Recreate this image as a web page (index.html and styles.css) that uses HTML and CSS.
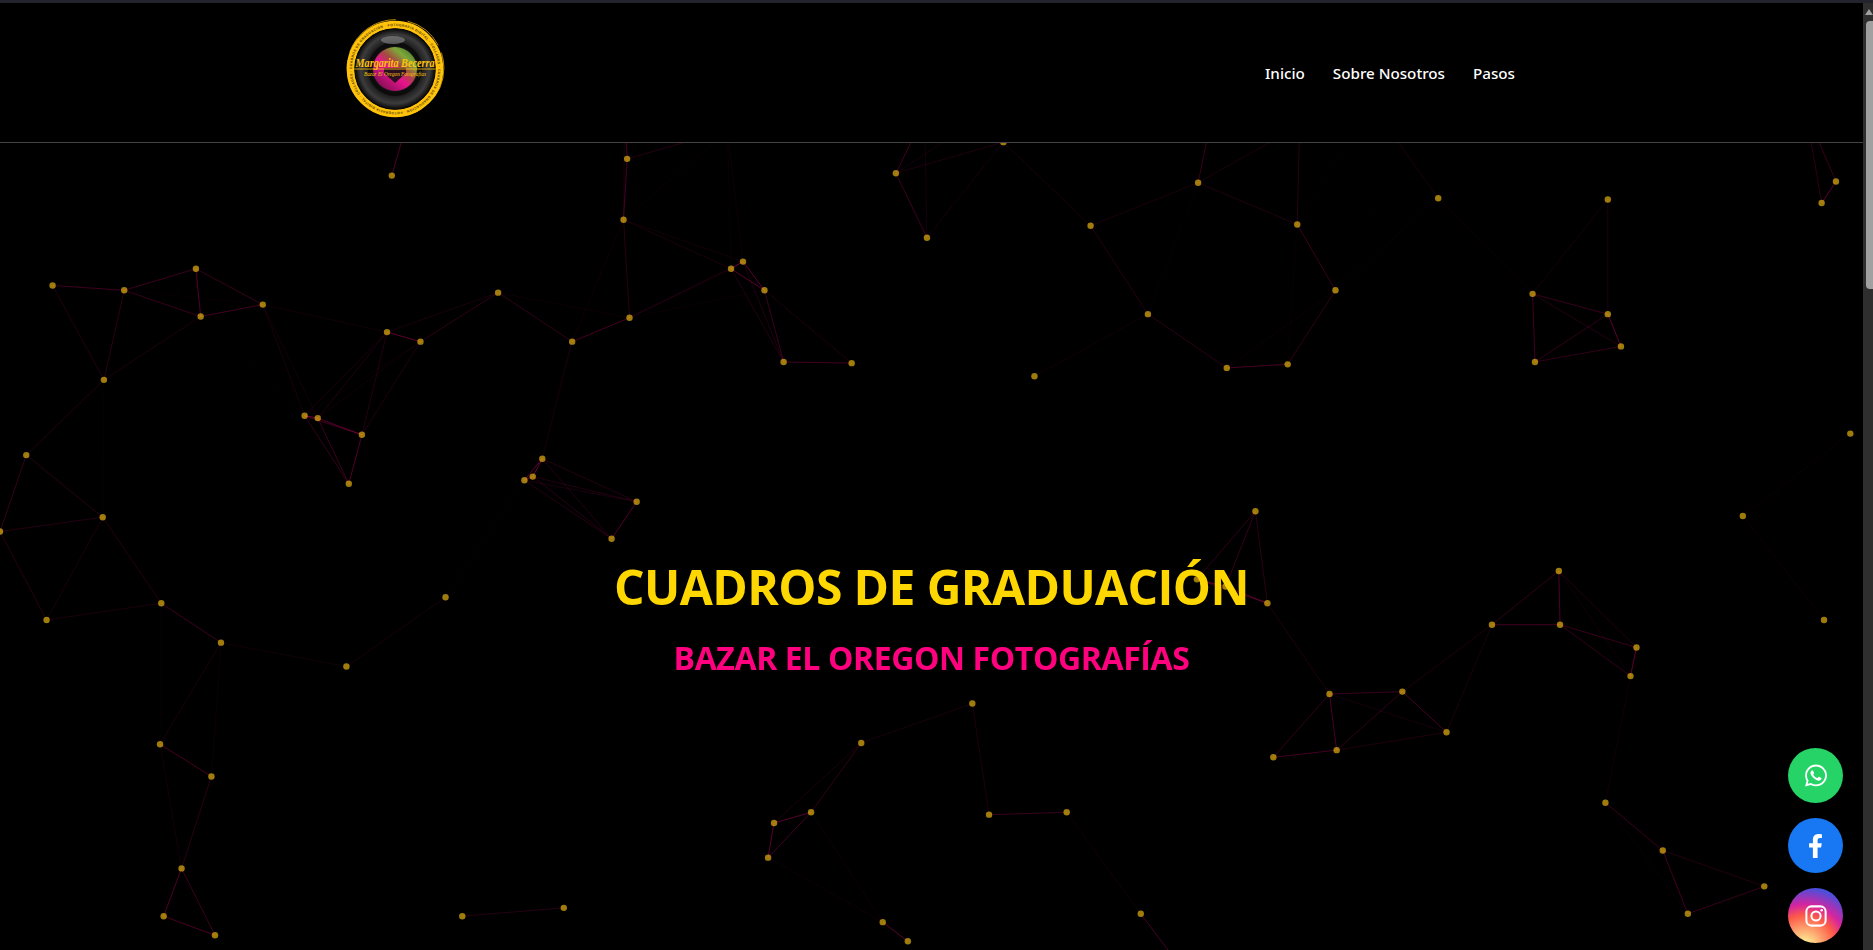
FILE: index.html
```html
<!DOCTYPE html>
<html lang="es">
<head>
    <meta charset="UTF-8">
    <meta name="viewport" content="width=device-width, initial-scale=1.0">
    <title>Cuadros de Graduación</title>
    <link rel="stylesheet" href="styles.css">
</head>
<body>
    <div class="window-bar"></div>
    <div class="window">
        <div class="page">
            <canvas id="particles" width="1863" height="947"></canvas>
            <header class="site-header">
                <a class="logo" href="#">
                    <svg viewBox="0 0 100 100" width="100" height="100">
                        <defs>
                            <radialGradient id="lensBody" cx="50%" cy="50%" r="50%">
                                <stop offset="0" stop-color="#444"/>
                                <stop offset="0.6" stop-color="#101010"/>
                                <stop offset="0.72" stop-color="#262626"/>
                                <stop offset="0.85" stop-color="#3c3c3c"/>
                                <stop offset="1" stop-color="#050505"/>
                            </radialGradient>
                            <linearGradient id="lensGlass" x1="0.15" y1="0.85" x2="0.8" y2="0.1">
                                <stop offset="0" stop-color="#8c0f5a"/>
                                <stop offset="0.4" stop-color="#e8148c"/>
                                <stop offset="0.62" stop-color="#a34a40"/>
                                <stop offset="0.85" stop-color="#7fa83a"/>
                                <stop offset="1" stop-color="#5c8a30"/>
                            </linearGradient>
                            <path id="ringPath" d="M50 50m-43 0a43 43 0 1 1 86 0a43 43 0 1 1-86 0"/>
                        </defs>
                        <circle cx="50" cy="50" r="44.5" fill="none" stroke="#ffc30b" stroke-width="7.5"/>
                        <circle cx="50.5" cy="49" r="48.4" fill="none" stroke="#ffc30b" stroke-width="0.7" stroke-dasharray="40 8 60 12"/>
                        <circle cx="50" cy="50" r="40.5" fill="url(#lensBody)"/>
                        <circle cx="50" cy="50" r="25" fill="none" stroke="#0c0c0c" stroke-width="4"/>
                        <circle cx="50" cy="50" r="22" fill="url(#lensGlass)"/>
                        <path class="lens-iris" d="M50 64 39 54 39 49 61 49 61 54z"/>
                        <ellipse cx="48" cy="21" rx="12" ry="4" fill="#8c8c8c" opacity="0.6"/>
                        <text class="logo-ring"><textPath href="#ringPath" textLength="268">CUADROS DE GRADUACIÓN · FOTOGRAFÍA DIGITAL · COLLAGES · CUADROS DE GRADUACIÓN · FOTOGRAFÍA DIGITAL · COLLAGES ·</textPath></text>
                        <line x1="9" y1="50" x2="91" y2="50" stroke="#ffc30b" stroke-width="0.8"/>
                        <text class="logo-name" x="50" y="48" text-anchor="middle" textLength="79" lengthAdjust="spacingAndGlyphs">Margarita Becerra</text>
                        <text class="logo-sub" x="50" y="56.5" text-anchor="middle" textLength="62" lengthAdjust="spacingAndGlyphs">Bazar El Oregon Fotografías</text>
                    </svg>
                </a>
                <nav class="main-nav">
                    <a href="#">Inicio</a>
                    <a href="#">Sobre Nosotros</a>
                    <a href="#">Pasos</a>
                </nav>
            </header>
            <section class="hero">
                <h1>CUADROS DE GRADUACIÓN</h1>
                <h2>BAZAR EL OREGON FOTOGRAFÍAS</h2>
            </section>
            <div class="social-links">
                <a class="social whatsapp" href="#" aria-label="WhatsApp">
                    <svg viewBox="0 0 448 512" width="22" height="25"><path fill="#fff" d="M380.9 97.1C339 55.1 283.2 32 223.9 32c-122.4 0-222 99.6-222 222 0 39.1 10.2 77.3 29.6 111L0 480l117.7-30.9c32.4 17.7 68.9 27 106.1 27h.1c122.3 0 224.1-99.6 224.1-222 0-59.3-25.2-115-67.1-157zm-157 341.6c-33.2 0-65.7-8.9-94-25.7l-6.7-4-69.8 18.3L72 359.2l-4.4-7c-18.5-29.4-28.2-63.3-28.2-98.2 0-101.7 82.8-184.5 184.6-184.5 49.3 0 95.6 19.2 130.4 54.1 34.8 34.9 56.2 81.2 56.1 130.5 0 101.8-84.9 184.6-186.6 184.6zm101.2-138.2c-5.5-2.8-32.8-16.2-37.9-18-5.1-1.9-8.8-2.8-12.5 2.8-3.7 5.6-14.3 18-17.6 21.8-3.2 3.7-6.5 4.2-12 1.4-32.6-16.3-54-29.1-75.5-66-5.7-9.8 5.7-9.1 16.3-30.3 1.8-3.7.9-6.9-.5-9.7-1.4-2.8-12.5-30.1-17.1-41.2-4.5-10.8-9.1-9.3-12.5-9.5-3.2-.2-6.9-.2-10.6-.2-3.7 0-9.7 1.4-14.8 6.9-5.1 5.6-19.4 19-19.4 46.3 0 27.3 19.9 53.7 22.6 57.4 2.8 3.7 39.1 59.7 94.8 83.8 35.2 15.2 49 16.5 66.6 13.9 10.7-1.6 32.8-13.4 37.4-26.4 4.6-13 4.6-24.1 3.2-26.4-1.3-2.5-5-3.9-10.5-6.6z"/></svg>
                </a>
                <a class="social facebook" href="#" aria-label="Facebook">
                    <svg viewBox="0 0 320 512" width="15" height="24"><path fill="#fff" d="M279.14 288l14.22-92.66h-88.91v-60.13c0-25.35 12.42-50.06 52.24-50.06h40.42V6.26S260.43 0 225.36 0c-73.22 0-121.08 44.38-121.08 124.72v70.62H22.89V288h81.39v224h100.17V288z"/></svg>
                </a>
                <a class="social instagram" href="#" aria-label="Instagram">
                    <svg viewBox="0 0 24 24" width="22" height="22">
                        <rect x="1.5" y="1.5" width="21" height="21" rx="5.5" fill="none" stroke="#fff" stroke-width="2.2"/>
                        <circle cx="12" cy="12" r="5" fill="none" stroke="#fff" stroke-width="2.2"/>
                        <circle cx="18.2" cy="5.8" r="1.4" fill="#fff"/>
                    </svg>
                </a>
            </div>
        </div>
        <div class="scrollbar">
            <div class="scroll-arrow"></div>
            <div class="scroll-thumb"></div>
        </div>
    </div>
    <script src="particles.js"></script>
</body>
</html>
```
FILE: styles.css
```css
* {
    box-sizing: border-box;
}
html, body {
    height: 100%;
    overflow: hidden;
}
body {
    margin: 0;
    background-color: #000;
    color: #fff;
    font-family: "Open Sans", "Noto Sans", sans-serif;
}
a {
    color: inherit;
    text-decoration: none;
}
.window-bar {
    height: 3px;
    background-color: #23232e;
}
.window {
    display: flex;
    height: 947px;
}
.page {
    position: relative;
    flex: 1;
    overflow: hidden;
    background-color: #000;
}
#particles {
    position: absolute;
    top: 0;
    left: 0;
}
.site-header {
    position: relative;
    display: flex;
    justify-content: space-between;
    align-items: center;
    height: 140px;
    padding: 0 348px 0 345px;
    background-color: #000;
    border-bottom: 1px solid #444;
}
.logo {
    display: flex;
    margin-top: -8px;
}
.lens-iris {
    fill: #2a0f20;
}
.logo-ring {
    font-family: "Liberation Sans", sans-serif;
    font-size: 3.4px;
    font-weight: 700;
    fill: #4a3200;
}
.logo-name {
    font-family: "Liberation Serif", serif;
    font-style: italic;
    font-weight: 700;
    font-size: 12px;
    fill: #ffc30b;
}
.logo-sub {
    font-family: "Liberation Serif", serif;
    font-style: italic;
    font-size: 6px;
    fill: #ffc30b;
}
.main-nav {
    display: flex;
    gap: 28px;
    margin-top: 1px;
    font-family: "Noto Sans", sans-serif;
    font-size: 15.2px;
    font-weight: 500;
}
.hero {
    position: relative;
    display: flex;
    flex-direction: column;
    align-items: center;
    padding-top: 408px;
}
.hero h1 {
    margin: 0;
    font-size: 48px;
    line-height: 72px;
    font-weight: 700;
    letter-spacing: -0.6px;
    color: #ffd700;
}
.hero h2 {
    margin: -1px 0 0;
    font-size: 32px;
    line-height: 72px;
    font-weight: 700;
    letter-spacing: -0.4px;
    color: #ff007f;
}
.social-links {
    position: absolute;
    right: 20px;
    bottom: 7px;
    display: flex;
    flex-direction: column;
    gap: 15px;
}
.social {
    display: flex;
    justify-content: center;
    align-items: center;
    width: 55px;
    height: 55px;
    border-radius: 50%;
}
.whatsapp {
    background-color: #25d366;
}
.facebook {
    background-color: #1877f2;
}
.instagram {
    background: radial-gradient(circle at 30% 107%, #fdf497 0%, #fdf497 5%, #fd5949 45%, #d6249f 60%, #285aeb 90%);
}
.scrollbar {
    display: flex;
    flex-direction: column;
    align-items: flex-end;
    width: 10px;
    background-color: #2e2e2e;
}
.scroll-arrow {
    width: 0;
    height: 0;
    margin-top: 6px;
    border-left: 4px solid transparent;
    border-right: 4px solid transparent;
    border-bottom: 6px solid #a0a0a0;
}
.scroll-thumb {
    width: 7px;
    height: 268px;
    margin-top: 6px;
    border-radius: 4px 0 0 4px;
    background-color: #a0a0a0;
}
```
FILE: particles.js
```js
// puntos medidos en la captura de 1568px, se escalan al ancho real
const scale = 1873 / 1568;
const maxDist = 150;

const points = [
    [328,147],[525,133],[522,184],[750,145],[776,199],[840,119],[913,189],[1003,153],[1086,188],[1204,166],
    [1346,167],[1537,152],[1525,170],[622,219],[612,225],[640,243],[656,303],[713,304],[527,266],[479,286],
    [417,245],[352,286],[324,278],[220,255],[168,265],[164,225],[104,243],[44,239],[87,318],[255,348],
    [266,350],[303,364],[292,405],[22,381],[0,445],[86,433],[39,519],[135,505],[185,538],[290,558],
    [373,500],[454,384],[446,399],[439,402],[533,420],[512,451],[961,263],[1118,243],[1078,305],[1027,308],
    [866,315],[1283,246],[1346,263],[1357,290],[1285,303],[1549,363],[1459,432],[1051,428],[1061,505],[1305,478],
    [1306,523],[1249,523],[1370,542],[1365,566],[1527,519],[1113,581],[1174,579],[1211,613],[1119,628],[1066,634],
    [814,589],[721,622],[679,680],[648,689],[643,718],[828,682],[893,680],[955,765],[739,772],[760,788],
    [472,760],[387,767],[134,623],[177,650],[152,727],[137,767],[180,783],[1344,672],[1392,712],[1477,742],
    [1413,765],
    // estos quedan debajo del header, del titulo o fuera de la pantalla
    [609,109],[523,85],[774,96],[837,88],[1016,90],[1088,105],[1147,86],[1512,94],[340,105],[985,805],
    [1002,485],[1026,491]
].map(p => [p[0] * scale, p[1] * scale - 3]);

const canvas = document.getElementById('particles');
const ctx = canvas.getContext('2d');

for (let i = 0; i < points.length; i++) {
    for (let j = i + 1; j < points.length; j++) {
        const dx = points[i][0] - points[j][0];
        const dy = points[i][1] - points[j][1];
        const dist = Math.sqrt(dx * dx + dy * dy);
        if (dist < maxDist) {
            ctx.strokeStyle = `rgba(255, 0, 128, ${0.46 * (1 - dist / maxDist)})`;
            ctx.lineWidth = 1;
            ctx.beginPath();
            ctx.moveTo(points[i][0], points[i][1]);
            ctx.lineTo(points[j][0], points[j][1]);
            ctx.stroke();
        }
    }
}

ctx.fillStyle = 'rgba(255, 200, 20, 0.62)';
points.forEach(p => {
    ctx.beginPath();
    ctx.arc(p[0], p[1], 3.2, 0, Math.PI * 2);
    ctx.fill();
});
```
